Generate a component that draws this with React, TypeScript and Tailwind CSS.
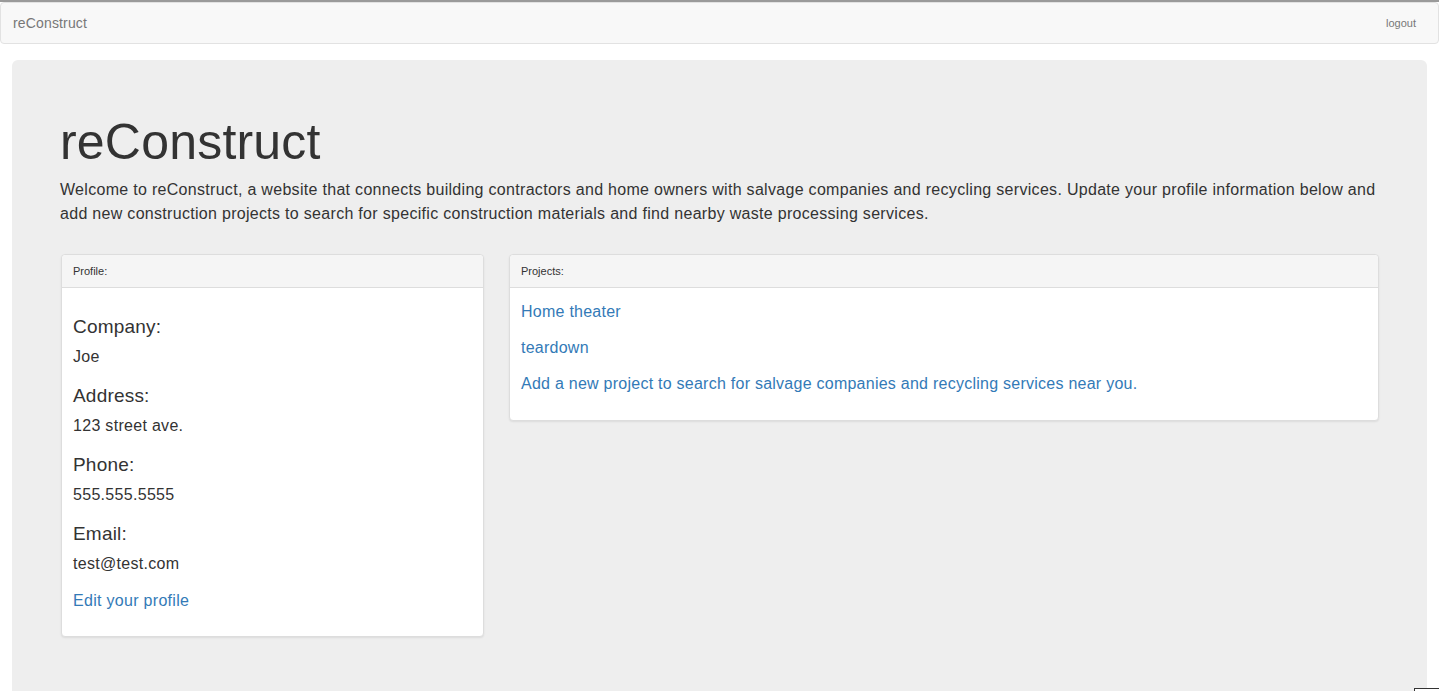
import React from 'react';

const profile = [
  { label: 'Company:', value: 'Joe' },
  { label: 'Address:', value: '123 street ave.' },
  { label: 'Phone:', value: '555.555.5555' },
  { label: 'Email:', value: 'test@test.com' },
];

const projects = [
  'Home theater',
  'teardown',
  'Add a new project to search for salvage companies and recycling services near you.',
];

const App: React.FC = () => {
  return (
    <div className="min-h-screen bg-white text-[#333] font-['Liberation_Sans',Arial,sans-serif]">
      <div className="h-[2px] bg-[#9a9a9a]" />
      <nav className="h-[42px] bg-[#f8f8f8] border border-[#e2e2e2] rounded-[4px] flex items-center justify-between pl-[12px] pr-[22px]">
        <a className="text-[14px] tracking-[0.15px] text-[#777]">reConstruct</a>
        <a className="text-[11px] text-[#777]">logout</a>
      </nav>

      <div className="mt-[16px] mx-[12px] bg-[#eee] rounded-[6px] pt-[55px] pb-[60px] px-[48px] min-h-[640px]">
        <h1 className="text-[50px] leading-[55px] tracking-[0.2px] mb-[8px]">reConstruct</h1>
        <p className="text-[16px] leading-[24px] tracking-[0.3px]">
          Welcome to reConstruct, a website that connects building contractors and home owners with salvage companies and recycling services. Update your profile information below and add new construction projects to search for specific construction materials and find nearby waste processing services.
        </p>

        <div className="mt-[28px] ml-[1px] flex items-start gap-[25px]">
          <div className="w-[423px] bg-white border border-[#ddd] rounded-[4px] shadow-[0_1px_2px_rgba(0,0,0,0.08)]">
            <div className="h-[33px] bg-[#f5f5f5] border-b border-[#ddd] rounded-t-[4px] px-[11px] flex items-center text-[11px]">
              Profile:
            </div>
            <div className="px-[11px] pt-[29px] pb-[23px]">
              {profile.map((p, i) => (
                <div key={p.label} className={i === profile.length - 1 ? 'mb-[13px]' : 'mb-[17px]'}>
                  <h4 className="text-[19px] leading-[20px] tracking-[0.2px] mb-[8px]">{p.label}</h4>
                  <div className="text-[16px] leading-[24px] tracking-[0.3px]">{p.value}</div>
                </div>
              ))}
              <a className="block text-[16px] leading-[24px] tracking-[0.3px] text-[#337ab7]">Edit your profile</a>
            </div>
          </div>

          <div className="flex-1 bg-white border border-[#ddd] rounded-[4px] shadow-[0_1px_2px_rgba(0,0,0,0.08)]">
            <div className="h-[33px] bg-[#f5f5f5] border-b border-[#ddd] rounded-t-[4px] px-[11px] flex items-center text-[11px]">
              Projects:
            </div>
            <div className="px-[11px] pt-[12px] pb-[24px] flex flex-col gap-[12px]">
              {projects.map((p) => (
                <a key={p} className="text-[16px] leading-[24px] tracking-[0.25px] text-[#337ab7]">{p}</a>
              ))}
            </div>
          </div>
        </div>
      </div>

      <div className="fixed left-[1414px] top-[688px] w-[30px] h-[10px] border border-[#333] bg-white" />
    </div>
  );
};

export default App;
